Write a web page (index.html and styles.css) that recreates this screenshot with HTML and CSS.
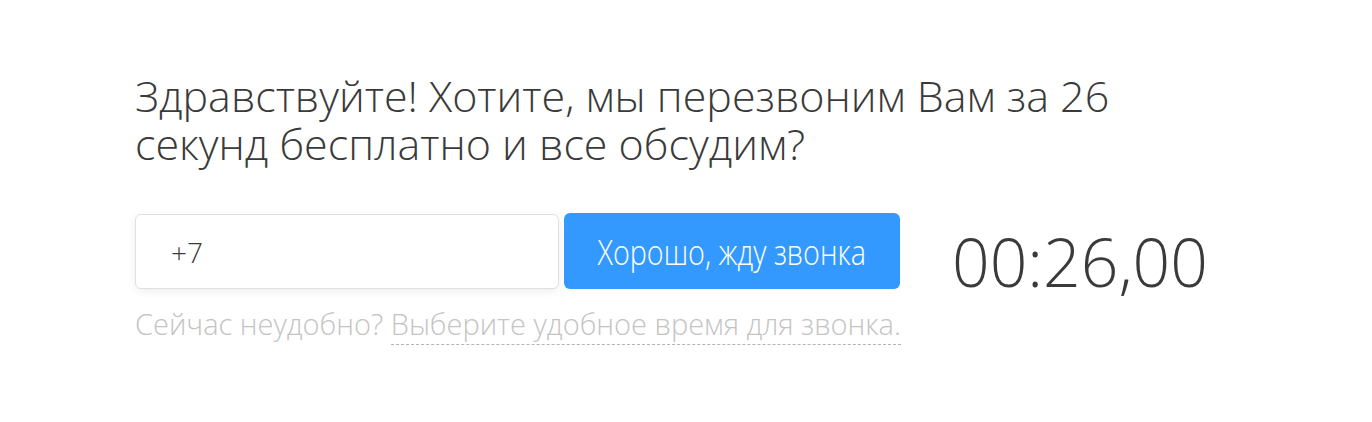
FILE: index.html
```html
<!DOCTYPE html>
<html lang="ru">
<head>
    <meta charset="UTF-8">
    <title>Обратный звонок</title>
    <link rel="stylesheet" href="styles.css">
</head>
<body>
    <div class="callback">
        <h1 class="callback-title">Здравствуйте! Хотите, мы перезвоним Вам за 26 секунд бесплатно и все обсудим?</h1>

        <div class="callback-row">
            <input type="text" class="phone-input" value="+7">
            <button class="call-btn"><span class="call-btn-label">Хорошо, жду звонка</span></button>
            <div class="timer">00:26,00</div>
        </div>

        <div class="callback-note">
            Сейчас неудобно? <a href="#" class="later-link">Выберите удобное время для звонка.</a>
        </div>
    </div>
</body>
</html>
```

FILE: styles.css
```css
:root {
    --text-color: #3a3a3a;
    --muted-color: #c4c4c4;
    --primary-color: #3399ff;
    --border-color: #e0e0e0;
}

body {
    margin: 0;
    background: #ffffff;
    font-family: 'Open Sans', 'Noto Sans', sans-serif;
    font-weight: 300;
    color: var(--text-color);
}

.callback {
    padding: 72px 0 0 135px;
}

.callback-title {
    margin: 0;
    max-width: 1050px;
    font-size: 43px;
    font-weight: 300;
    line-height: 48px;
    color: var(--text-color);
}

.callback-row {
    display: flex;
    align-items: flex-start;
    margin-top: 46px;
}

.phone-input {
    box-sizing: border-box;
    width: 424px;
    height: 75px;
    padding: 0 35px;
    border: 1px solid var(--border-color);
    border-radius: 6px;
    box-shadow: 0 2px 10px rgba(0, 0, 0, 0.07);
    font-family: inherit;
    font-weight: 300;
    font-size: 28px;
    color: var(--text-color);
    outline: none;
}

.call-btn {
    box-sizing: border-box;
    width: 336px;
    height: 76px;
    margin: -1px 0 0 5px;
    padding: 0;
    border: none;
    border-radius: 6px;
    background-color: var(--primary-color);
    color: #ffffff;
    font-family: inherit;
    font-weight: 300;
    font-size: 35px;
    cursor: pointer;
}

/* the label in the shot is narrower than plain Open Sans */
.call-btn-label {
    display: inline-block;
    transform: scaleX(0.82);
    white-space: nowrap;
}

.timer {
    margin: 14px 0 0 52px;
    font-size: 66px;
    font-weight: 300;
    line-height: 1;
    color: var(--text-color);
}

.callback-note {
    margin-top: 10px;
    font-size: 29px;
    color: var(--muted-color);
}

.later-link {
    display: inline-block;
    line-height: 40px;
    color: var(--muted-color);
    text-decoration: none;
    border-bottom: 1px dashed #b4b4b4;
}
```
